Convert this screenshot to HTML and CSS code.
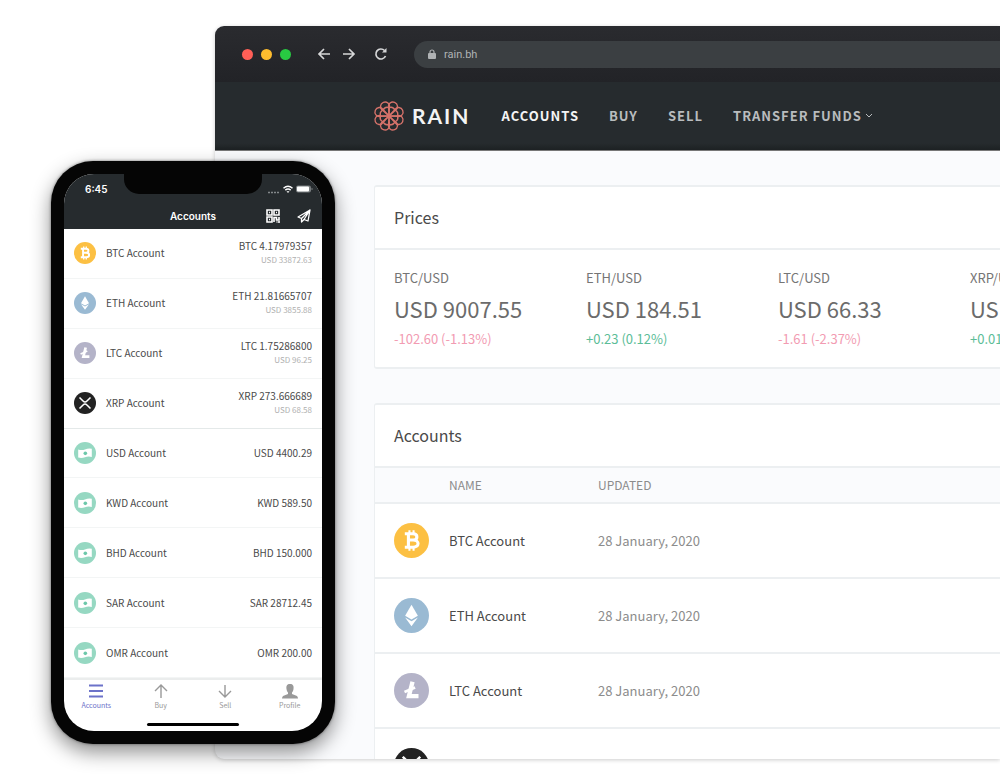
FILE: index.html
```html
<!DOCTYPE html>
<html lang="en">
<head>
    <meta charset="UTF-8">
    <meta name="viewport" content="width=device-width, initial-scale=1.0">
    <title>Rain</title>
    <link rel="stylesheet" href="styles.css">
</head>
<body>
    <!-- Shared icons -->
    <svg class="sprite" aria-hidden="true">
        <symbol id="btc" viewBox="0 0 34 34">
            <circle cx="17" cy="17" r="17" fill="#fcc043"/>
            <g fill="none" stroke="#fff" stroke-width="3">
                <path d="M10.500 10.500H18.500C23.500 10.500 23.500 16.500 18.500 16.500H14M18.500 16.500C25 16.500 25 23.500 18.500 23.500H10.500M14 10.500V23.500"/>
                <path d="M15 7V11M19 7V11M15 23V27M19 23V27" stroke-width="2"/>
            </g>
        </symbol>
        <symbol id="eth" viewBox="0 0 34 34">
            <circle cx="17" cy="17" r="17" fill="#9abad3"/>
            <path d="M17 6.500L10.800 17.200L17 20.800L23.200 17.200Z" fill="#fff"/>
            <path d="M10.800 19L17 22.600L23.200 19L17 27.500Z" fill="#fff"/>
        </symbol>
        <symbol id="ltc" viewBox="0 0 34 34">
            <circle cx="17" cy="17" r="17" fill="#b4b3c8"/>
            <path d="M18 8.500L14.500 22.500H23.800" fill="none" stroke="#fff" stroke-width="4.200"/>
            <path d="M10.200 18.500L20.500 14" fill="none" stroke="#fff" stroke-width="2.600"/>
        </symbol>
        <symbol id="xrp" viewBox="0 0 34 34">
            <circle cx="17" cy="17" r="17" fill="#222"/>
            <path d="M8.500 8.500L14 14Q17 17 20 14L25.500 8.500M8.500 25.500L14 20Q17 17 20 20L25.500 25.500" fill="none" stroke="#fff" stroke-width="2.400"/>
        </symbol>
        <symbol id="cash" viewBox="0 0 34 34">
            <circle cx="17" cy="17" r="17" fill="#96d8c2"/>
            <path d="M6.500 11.500Q12 13.500 17 11.500T27.500 10.500V23Q22 21.500 17 23.500T6.500 24Z" fill="#fff"/>
            <circle cx="17.500" cy="17.500" r="2.800" fill="#6cc8aa"/>
        </symbol>
        <symbol id="petal" viewBox="-16 -16 32 32">
            <g fill="none" stroke="#d5726a" stroke-width="1.400">
                <path d="M0 0L3.500 -7.500C6 -11 3.500 -14.800 0 -14.800C-3.500 -14.800 -6 -11 -3.500 -7.500Z"/>
                <path d="M-3.500 -7.500Q0 -11 3.500 -7.500" />
            </g>
        </symbol>
    </svg>

    <main class="showcase">
        <section class="browser">
            <header class="chrome">
                <div class="lights">
                    <span class="light red"></span>
                    <span class="light yellow"></span>
                    <span class="light green"></span>
                </div>
                <div class="controls">
                    <button type="button" aria-label="Back">
                        <svg viewBox="0 0 14 14"><path d="M13 7H2M7 2L2 7L7 12"/></svg>
                    </button>
                    <button type="button" aria-label="Forward">
                        <svg viewBox="0 0 14 14"><path d="M1 7H12M7 2L12 7L7 12"/></svg>
                    </button>
                    <button type="button" class="reload" aria-label="Reload">
                        <svg viewBox="0 0 14 14"><path d="M11.500 9A5 5 0 1 1 10.500 3.500"/><path d="M8 5.500H12.500V1Z" fill="#d6d7d8" stroke="none"/></svg>
                    </button>
                </div>
                <div class="address">
                    <svg viewBox="0 0 8 10"><rect y="4" width="8" height="6" rx="1" fill="#b0b3b5"/><path d="M2 5V3A2 2 0 0 1 6 3V5" fill="none" stroke="#b0b3b5" stroke-width="1.200"/></svg>
                    <input type="text" value="rain.bh" aria-label="Address">
                </div>
            </header>

            <nav class="navbar">
                <a class="brand" href="#">
                    <svg viewBox="-16 -16 32 32">
                        <use href="#petal" x="-16" y="-16" width="32" height="32" transform="rotate(22.500)"/>
                        <use href="#petal" x="-16" y="-16" width="32" height="32" transform="rotate(67.500)"/>
                        <use href="#petal" x="-16" y="-16" width="32" height="32" transform="rotate(112.500)"/>
                        <use href="#petal" x="-16" y="-16" width="32" height="32" transform="rotate(157.500)"/>
                        <use href="#petal" x="-16" y="-16" width="32" height="32" transform="rotate(202.500)"/>
                        <use href="#petal" x="-16" y="-16" width="32" height="32" transform="rotate(247.500)"/>
                        <use href="#petal" x="-16" y="-16" width="32" height="32" transform="rotate(292.500)"/>
                        <use href="#petal" x="-16" y="-16" width="32" height="32" transform="rotate(337.500)"/>
                    </svg>
                    <span>RAIN</span>
                </a>
                <a class="nav-link active" href="#">ACCOUNTS</a>
                <a class="nav-link" href="#">BUY</a>
                <a class="nav-link" href="#">SELL</a>
                <a class="nav-link" href="#">TRANSFER FUNDS<svg viewBox="0 0 8 6"><path d="M1 1L4 4L7 1"/></svg></a>
            </nav>

            <div class="content">
                <section class="card">
                    <h2>Prices</h2>
                    <div class="prices">
                        <div class="price">
                            <p class="pair">BTC/USD</p>
                            <p class="value">USD 9007.55</p>
                            <p class="change down">-102.60 (-1.13%)</p>
                        </div>
                        <div class="price">
                            <p class="pair">ETH/USD</p>
                            <p class="value">USD 184.51</p>
                            <p class="change up">+0.23 (0.12%)</p>
                        </div>
                        <div class="price">
                            <p class="pair">LTC/USD</p>
                            <p class="value">USD 66.33</p>
                            <p class="change down">-1.61 (-2.37%)</p>
                        </div>
                        <div class="price">
                            <p class="pair">XRP/USD</p>
                            <p class="value">USD 0.25</p>
                            <p class="change up">+0.01 (0.12%)</p>
                        </div>
                    </div>
                </section>

                <section class="card">
                    <h2>Accounts</h2>
                    <table class="accounts">
                        <thead>
                            <tr><th class="coin-col"></th><th class="name-col">NAME</th><th>UPDATED</th></tr>
                        </thead>
                        <tbody>
                            <tr><td><svg class="coin"><use href="#btc"/></svg></td><td>BTC Account</td><td class="date">28 January, 2020</td></tr>
                            <tr><td><svg class="coin"><use href="#eth"/></svg></td><td>ETH Account</td><td class="date">28 January, 2020</td></tr>
                            <tr><td><svg class="coin"><use href="#ltc"/></svg></td><td>LTC Account</td><td class="date">28 January, 2020</td></tr>
                            <tr><td><svg class="coin"><use href="#xrp"/></svg></td><td></td><td></td></tr>
                        </tbody>
                    </table>
                </section>
            </div>
        </section>

        <section class="phone">
            <div class="notch"></div>
            <div class="screen">
                <div class="status">
                    <span>6:45</span>
                    <svg viewBox="0 0 46 10">
                        <path d="M0 8.500H12" stroke="#83888a" stroke-width="1.500" stroke-dasharray="2 1"/>
                        <g fill="none" stroke="#fff" stroke-width="1.500"><path d="M15.500 4.200Q20 0.200 24.500 4.200M17.300 6.200Q20 4 22.700 6.200"/></g>
                        <path d="M18.500 7.300H21.500L20 9Z" fill="#fff"/>
                        <rect x="28" y="1.500" width="15" height="7" rx="2" fill="#777c7e"/>
                        <rect x="29" y="2.500" width="12" height="5" rx="1" fill="#fff"/>
                        <path d="M44 4V6" stroke="#777c7e"/>
                    </svg>
                </div>
                <header class="app-bar">
                    <h1>Accounts</h1>
                    <div class="actions">
                        <button type="button" aria-label="Scan code">
                            <svg viewBox="0 0 14 14" fill="none" stroke="#fff" stroke-width="1.600">
                                <path d="M1 1H6V6H1ZM8 1H13V6H8ZM1 8H6V13H1Z"/>
                                <path d="M3 3.500H4M10 3.500H11M3 10.500H4M8 13V8.500H10.500V11H13V8M10.500 13H11.500M13 12V14"/>
                            </svg>
                        </button>
                        <button type="button" aria-label="Send">
                            <svg viewBox="0 0 14 14" fill="none" stroke="#fff" stroke-width="1.300" stroke-linejoin="round">
                                <path d="M13 1L1 8L4.500 9.500ZM13 1L11 12L7 10.500ZM4.500 9.500V13L7 10.500"/>
                            </svg>
                        </button>
                    </div>
                </header>
                <ul class="wallets">
                    <li><svg><use href="#btc"/></svg><span>BTC Account</span><div class="amount">BTC 4.17979357<small>USD 33872.63</small></div></li>
                    <li><svg><use href="#eth"/></svg><span>ETH Account</span><div class="amount">ETH 21.81665707<small>USD 3855.88</small></div></li>
                    <li><svg><use href="#ltc"/></svg><span>LTC Account</span><div class="amount">LTC 1.75286800<small>USD 96.25</small></div></li>
                    <li class="last-coin"><svg><use href="#xrp"/></svg><span>XRP Account</span><div class="amount">XRP 273.666689<small>USD 68.58</small></div></li>
                    <li><svg><use href="#cash"/></svg><span>USD Account</span><div class="amount">USD 4400.29</div></li>
                    <li><svg><use href="#cash"/></svg><span>KWD Account</span><div class="amount">KWD 589.50</div></li>
                    <li><svg><use href="#cash"/></svg><span>BHD Account</span><div class="amount">BHD 150.000</div></li>
                    <li><svg><use href="#cash"/></svg><span>SAR Account</span><div class="amount">SAR 28712.45</div></li>
                    <li><svg><use href="#cash"/></svg><span>OMR Account</span><div class="amount">OMR 200.00</div></li>
                </ul>
                <nav class="tabs">
                    <a class="active" href="#"><svg viewBox="0 0 16 16"><path d="M1 2.500H15M1 8H15M1 13.500H15" stroke-width="2"/></svg>Accounts</a>
                    <a href="#"><svg viewBox="0 0 16 16"><path d="M8 15V2M2 8L8 2L14 8"/></svg>Buy</a>
                    <a href="#"><svg viewBox="0 0 16 16"><path d="M8 2V14M2 8L8 14L14 8"/></svg>Sell</a>
                    <a href="#"><svg viewBox="0 0 16 16"><path d="M8 1C11 1 12 3 11.500 6C11.300 8 10.500 9 10 9.500V11L15 13Q16 14 16 15.500H0Q0 14 1 13L6 11V9.500C5.500 9 4.700 8 4.500 6C4 3 5 1 8 1Z" fill="currentColor" stroke="none"/></svg>Profile</a>
                </nav>
                <div class="home-bar"></div>
            </div>
        </section>
    </main>
</body>
</html>
```
FILE: styles.css
```css
:root {
    --dark: #262b2e;
    --page-bg: #fafbfd;
    --line: #eceff1;
    --text: #4a4a4a;
    --muted: #8c8c8c;
    --down: #f29bb2;
    --up: #5cbd98;
    --accent: #6c72c9;
}

* {
    margin: 0;
    padding: 0;
    box-sizing: border-box;
}

body {
    font-family: "Noto Sans CJK SC", "Noto Sans", sans-serif;
    background: #fff;
    color: var(--text);
    overflow: hidden;
}

a {
    color: inherit;
    text-decoration: none;
}

button {
    display: flex;
    background: none;
    border: none;
    cursor: pointer;
}

.sprite {
    position: absolute;
    width: 0;
    height: 0;
}

.showcase {
    position: relative;
    height: 100vh;
    padding: 26px 0 21px 215px;
}

/* Desktop window */
.browser {
    height: 100%;
    background: var(--page-bg);
    border-radius: 9px 0 0 9px;
    box-shadow: 0 1px 4px rgba(0, 0, 0, 0.2);
    overflow: hidden;
}

.chrome {
    display: flex;
    align-items: center;
    height: 56px;
    padding-left: 27px;
    background: linear-gradient(#2a2b2f, #222327);
}

.lights {
    display: flex;
    gap: 8px;
}

.light {
    width: 11px;
    height: 11px;
    border-radius: 50%;
}

.red {
    background: #ff5f57;
}

.yellow {
    background: #ffbd2e;
}

.green {
    background: #28ca42;
}

.controls {
    display: flex;
    gap: 11px;
    margin: 0 26px;
}

.controls svg {
    width: 14px;
    height: 14px;
    fill: none;
    stroke: #d6d7d8;
    stroke-width: 1.7;
}

.reload {
    margin-left: 7px;
}

.address {
    display: flex;
    flex: 1;
    align-items: center;
    gap: 8px;
    height: 27px;
    padding-left: 14px;
    background: #3b3f42;
    border-radius: 14px 0 0 14px;
}

.address svg {
    width: 8px;
    height: 10px;
}

.address input {
    flex: 1;
    padding-top: 2px;
    background: none;
    border: none;
    outline: none;
    color: #b0b3b5;
    font: 11px/16px Roboto, sans-serif;
}

.navbar {
    display: flex;
    align-items: center;
    gap: 30px;
    height: 69px;
    padding-left: 158px;
    background: linear-gradient(var(--dark) 90%, #1d2123);
    border-bottom: 1px solid #777;
}

.brand {
    display: flex;
    align-items: center;
    gap: 7px;
    margin-right: 1px;
    color: #f4f4f4;
    font: 700 21px/24px Lato, sans-serif;
    letter-spacing: 2px;
}

.brand svg {
    width: 32px;
    height: 32px;
}

.nav-link {
    color: #b9bcbe;
    font-size: 13px;
    font-weight: 700;
    line-height: 20px;
    letter-spacing: 1px;
    white-space: nowrap;
}

.nav-link.active {
    color: #f4f4f4;
}

.nav-link svg {
    width: 8px;
    height: 6px;
    margin: 0 0 2px 3px;
    fill: none;
    stroke: currentColor;
}

.content {
    display: flex;
    flex-direction: column;
    gap: 34px;
    padding: 34px 0 0 159px;
}

.card {
    background: #fff;
    border: 1px solid var(--line);
    border-width: 2px 0 2px 1px;
    border-radius: 3px 0 0 3px;
}

.card h2 {
    padding: 18px 19px;
    border-bottom: 2px solid var(--line);
    font-size: 16px;
    font-weight: 400;
    line-height: 25px;
}

.prices {
    display: grid;
    grid-auto-flow: column;
    grid-auto-columns: 192px;
    padding: 18px 0 18px 19px;
    overflow: hidden;
}

.price {
    white-space: nowrap;
}

.pair {
    color: #757575;
    font-size: 13px;
    line-height: 20px;
}

.value {
    color: #6b6b6b;
    font-size: 22px;
    line-height: 41px;
}

.change {
    font-size: 13px;
    line-height: 20px;
}

.down {
    color: var(--down);
}

.up {
    color: var(--up);
}

.accounts {
    width: 100%;
    border-collapse: collapse;
    table-layout: fixed;
    text-align: left;
    font-size: 13px;
    line-height: 20px;
}

.accounts th {
    height: 35px;
    background: var(--page-bg);
    border-bottom: 2px solid var(--line);
    color: var(--muted);
    font-size: 12px;
    font-weight: 400;
}

.accounts td {
    height: 75px;
    border-bottom: 2px solid var(--line);
}

.accounts .coin-col {
    width: 74px;
}

.accounts .name-col {
    width: 149px;
}

.accounts .date {
    color: var(--muted);
}

.coin {
    display: block;
    width: 35px;
    height: 35px;
    margin-left: 19px;
}

/* Phone, overlapping the window */
.phone {
    position: absolute;
    top: 161px;
    left: 51px;
    width: 284px;
    height: 583px;
    padding: 13px;
    background: #050505;
    border-radius: 42px;
    box-shadow: 0 8px 20px rgba(0, 0, 0, 0.45), 0 0 3px rgba(0, 0, 0, 0.5);
}

.notch {
    position: absolute;
    top: 10px;
    left: 73px;
    right: 73px;
    height: 23px;
    background: #050505;
    border-radius: 0 0 15px 15px;
}

.screen {
    display: flex;
    flex-direction: column;
    height: 100%;
    background: #fff;
    border-radius: 30px;
    overflow: hidden;
}

.status {
    display: flex;
    justify-content: space-between;
    align-items: center;
    height: 28px;
    padding: 2px 8px 0 21px;
    background: var(--dark);
    color: #fff;
    font: 600 10px/14px Inter, sans-serif;
}

.status svg {
    width: 46px;
    height: 10px;
}

.app-bar {
    display: grid;
    grid-template-columns: 1fr auto 1fr;
    align-items: center;
    height: 27px;
    padding: 0 11px;
    background: var(--dark);
    color: #fff;
}

.app-bar h1 {
    grid-column: 2;
    font: 600 10px/14px Inter, sans-serif;
}

.actions {
    display: flex;
    justify-content: flex-end;
    gap: 17px;
}

.app-bar svg {
    width: 14px;
    height: 14px;
}

.wallets {
    display: flex;
    flex: 1;
    flex-direction: column;
    list-style: none;
    font-size: 10px;
    line-height: 14px;
}

.wallets li {
    display: flex;
    flex: 1;
    align-items: center;
    gap: 10px;
    padding: 0 10px;
    border-bottom: 1px solid #f3f5f5;
}

.wallets .last-coin {
    border-color: #e4e9e9;
}

.wallets svg {
    width: 22px;
    height: 22px;
}

.amount {
    margin-left: auto;
    text-align: right;
}

.amount small {
    display: block;
    color: #b0b0b0;
    font-size: 8px;
}

.tabs {
    display: grid;
    grid-template-columns: repeat(4, 1fr);
    padding-top: 3px;
    border-top: 2px solid #ebeded;
    color: #999;
    font-size: 7px;
    line-height: 10px;
}

.tabs a {
    display: flex;
    flex-direction: column;
    align-items: center;
    gap: 1px;
}

.tabs .active {
    color: var(--accent);
}

.tabs svg {
    width: 16px;
    height: 16px;
    fill: none;
    stroke: currentColor;
    stroke-width: 1.4;
}

.home-bar {
    width: 92px;
    height: 3px;
    margin: 13px auto 5px;
    background: #000;
    border-radius: 2px;
}
```
